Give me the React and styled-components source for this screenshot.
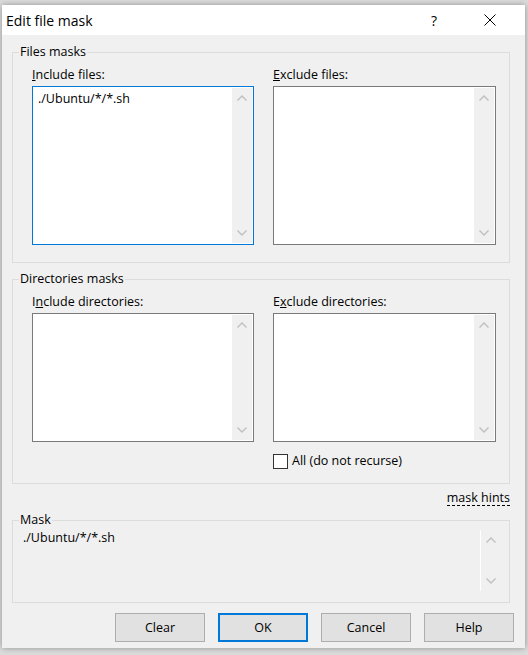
import React from "react";
import styled, { createGlobalStyle } from "styled-components";

const GlobalStyle = createGlobalStyle`
  html, body {
    margin: 0;
    padding: 0;
    background: #dcdcdc;
  }
  body {
    font-family: "Open Sans", "Liberation Sans", Arial, sans-serif;
    font-size: 12.5px;
    color: #000;
  }
`;

const Desktop = styled.div`
  height: 655px;
  box-sizing: border-box;
  padding: 5px 3px 0 2px;
  overflow: hidden;
`;

const Window = styled.div`
  width: 523px;
  height: 643px;
  display: flex;
  flex-direction: column;
  background: #f0f0f0;
  box-shadow: 0 0 6px rgba(0, 0, 0, 0.35);
`;

const TitleBar = styled.div`
  height: 30px;
  flex: none;
  display: flex;
  align-items: center;
  gap: 10px;
  padding: 0 12px 0 4px;
  background: #fff;
`;

const Title = styled.div`
  flex: 1;
  font-size: 14px;
`;

const TitleButton = styled.div`
  width: 46px;
  height: 30px;
  display: flex;
  align-items: center;
  justify-content: center;
  font-size: 14px;
`;

const Body = styled.div`
  flex: 1;
  display: flex;
  flex-direction: column;
  padding: 0 11px 0 10px;
`;

const Group = styled.fieldset`
  margin: ${(p) => p.$top}px 4px 0 0;
  padding: 0;
  min-width: 0;
  border: 1px solid #dcdcdc;
`;

const Legend = styled.legend`
  margin-left: 6px;
  padding: 0 1px;
  line-height: 16px;
`;

const GroupContent = styled.div`
  display: grid;
  grid-template-columns: 222px 223px;
  column-gap: 19px;
  align-items: start;
  padding: 7px 13px ${(p) => p.$bottom}px 19px;
`;

const Column = styled.div`
  display: flex;
  flex-direction: column;
`;

const Label = styled.div`
  line-height: 16px;
  margin-bottom: 3px;
  white-space: nowrap;
`;

const Key = styled.span`
  text-decoration: underline;
`;

const TextBox = styled.div`
  height: ${(p) => p.$height}px;
  box-sizing: border-box;
  display: flex;
  background: #fff;
  border: 1px solid ${(p) => (p.$focused ? "#0078d7" : "#7a7a7a")};
`;

const TextArea = styled.div`
  flex: 1;
  padding: 4px 0 0 5px;
  line-height: 16px;
  white-space: pre;
`;

const ScrollBar = styled.div`
  width: 20px;
  flex: none;
  margin: 1px 1px 1px 0;
  display: flex;
  flex-direction: column;
  justify-content: space-between;
  background: #f0f0f0;
  border-left: ${(p) => (p.$edge ? "1px solid #fff" : "none")};
`;

const ArrowButton = styled.div`
  height: 20px;
  display: flex;
  align-items: center;
  justify-content: center;
`;

const CheckRow = styled.label`
  display: flex;
  align-items: center;
  gap: 4px;
  margin-top: 11px;
  line-height: 16px;
`;

const CheckBox = styled.span`
  width: 15px;
  height: 15px;
  box-sizing: border-box;
  border: 1px solid #333;
  background: #fff;
`;

const HintsRow = styled.div`
  display: flex;
  justify-content: flex-end;
  margin: 6px 4px 0 0;
`;

const HintsLink = styled.span`
  line-height: 15px;
  border-bottom: 1px dashed #000;
`;

const MaskContent = styled.div`
  padding: 1px 7px 10px 0;
`;

const Memo = styled.div`
  height: 63px;
  display: flex;
`;

const MemoText = styled.div`
  flex: 1;
  padding: 1px 0 0 10px;
  line-height: 16px;
`;

const ButtonRow = styled.div`
  display: flex;
  justify-content: flex-end;
  gap: 13px;
  margin-top: 10px;
`;

const Button = styled.div`
  width: 90px;
  height: 29px;
  box-sizing: border-box;
  display: flex;
  align-items: center;
  justify-content: center;
  background: #e1e1e1;
  border: ${(p) => (p.$default ? "2px solid #0078d7" : "1px solid #adadad")};
`;

const Chevron = ({ down }) => (
  <svg width="10" height="6" viewBox="0 0 10 6">
    <polyline
      points={down ? "0.5,0.5 5,5 9.5,0.5" : "0.5,5.5 5,1 9.5,5.5"}
      fill="none"
      stroke="#bfbfbf"
      strokeWidth="1.4"
    />
  </svg>
);

const Scroll = ({ edge }) => (
  <ScrollBar $edge={edge}>
    <ArrowButton>
      <Chevron />
    </ArrowButton>
    <ArrowButton>
      <Chevron down />
    </ArrowButton>
  </ScrollBar>
);

const MaskField = ({ label, height, focused, value }) => (
  <>
    <Label>{label}</Label>
    <TextBox $height={height} $focused={focused}>
      <TextArea>{value}</TextArea>
      <Scroll />
    </TextBox>
  </>
);

const App = () => {
  const mask = "./Ubuntu/*/*.sh";
  return (
    <Desktop>
      <GlobalStyle />
      <Window>
        <TitleBar>
          <Title>Edit file mask</Title>
          <TitleButton>?</TitleButton>
          <TitleButton>
            <svg width="12" height="12" viewBox="0 0 12 12">
              <path d="M0.5 0.5 L11.5 11.5 M11.5 0.5 L0.5 11.5" stroke="#000" strokeWidth="1" />
            </svg>
          </TitleButton>
        </TitleBar>
        <Body>
          <Group $top={9}>
            <Legend>Files masks</Legend>
            <GroupContent $bottom={17}>
              <Column>
                <MaskField
                  label={<><Key>I</Key>nclude files:</>}
                  height={159}
                  focused
                  value={mask}
                />
              </Column>
              <Column>
                <MaskField label={<><Key>E</Key>xclude files:</>} height={159} />
              </Column>
            </GroupContent>
          </Group>

          <Group $top={8}>
            <Legend>Directories masks</Legend>
            <GroupContent $bottom={14}>
              <Column>
                <MaskField label={<>I<Key>n</Key>clude directories:</>} height={129} />
              </Column>
              <Column>
                <MaskField label={<>E<Key>x</Key>clude directories:</>} height={129} />
                <CheckRow>
                  <CheckBox />
                  All (do not recurse)
                </CheckRow>
              </Column>
            </GroupContent>
          </Group>

          <HintsRow>
            <HintsLink>mask hints</HintsLink>
          </HintsRow>

          <Group $top={6}>
            <Legend>Mask</Legend>
            <MaskContent>
              <Memo>
                <MemoText>{mask}</MemoText>
                <Scroll edge />
              </Memo>
            </MaskContent>
          </Group>

          <ButtonRow>
            <Button>Clear</Button>
            <Button $default>OK</Button>
            <Button>Cancel</Button>
            <Button>Help</Button>
          </ButtonRow>
        </Body>
      </Window>
    </Desktop>
  );
};

export default App;
